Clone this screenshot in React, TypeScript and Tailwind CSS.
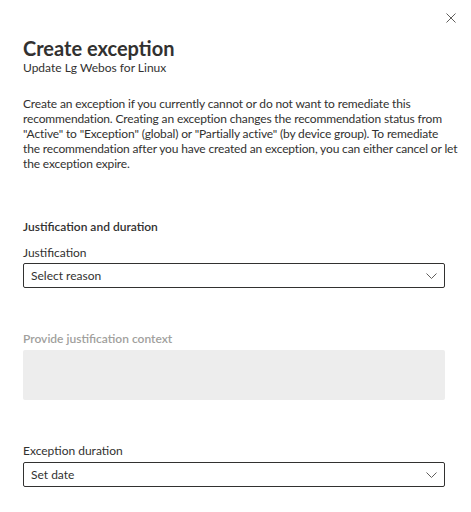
const font = { fontFamily: '"Segoe UI", Lato, "Noto Sans", sans-serif' };

function Chevron() {
  return (
    <svg width="11" height="6" viewBox="0 0 11 6" fill="none" className="text-[#605e5c]">
      <path d="M0.5 0.5 L5.5 5.5 L10.5 0.5" stroke="currentColor" strokeWidth="1" />
    </svg>
  );
}

function Dropdown({ value }: { value: string }) {
  return (
    <div className="flex h-[25px] items-center justify-between rounded-[2px] border border-[#323130] pl-[7px] pr-[7px] text-[12px] text-[#323130]">
      <span>{value}</span>
      <Chevron />
    </div>
  );
}

export default function App() {
  return (
    <div className="relative h-[512px] w-full bg-white text-[#323130]" style={font}>
      <button className="absolute right-[14px] top-[12px] p-[1px] text-[#605e5c]" aria-label="Close">
        <svg width="10" height="10" viewBox="0 0 10 10" fill="none">
          <path d="M0.5 0.5 L9.5 9.5 M9.5 0.5 L0.5 9.5" stroke="currentColor" strokeWidth="1" />
        </svg>
      </button>
      <div className="flex flex-col pl-[23px] pr-[26px] pt-[36px]">
        <h1 className="text-[20px] font-bold leading-[24px]">Create exception</h1>
        <p className="text-[12px] leading-[16px]">Update Lg Webos for Linux</p>
        <p className="-mr-[20px] mt-[20px] text-[12px] leading-[15px] tracking-[-0.15px] text-[#323130]">
          Create an exception if you currently cannot or do not want to remediate this
          <br />
          recommendation. Creating an exception changes the recommendation status from
          <br />
          "Active" to "Exception" (global) or "Partially active" (by device group). To remediate
          <br />
          the recommendation after you have created an exception, you can either cancel or let
          <br />
          the exception expire.
        </p>
        <h2 className="mt-[48px] text-[12px] font-semibold leading-[16px]">Justification and duration</h2>
        <label className="mt-[10px] text-[12px] leading-[16px]">Justification</label>
        <div className="mt-[2px]">
          <Dropdown value="Select reason" />
        </div>
        <label className="mt-[43px] text-[12px] font-semibold leading-[16px] text-[#a19f9d]">
          Provide justification context
        </label>
        <div className="mt-[3px] h-[50px] rounded-[2px] bg-[#ededed]" />
        <label className="mt-[43px] text-[12px] leading-[16px]">Exception duration</label>
        <div className="mt-[3px]">
          <Dropdown value="Set date" />
        </div>
      </div>
    </div>
  );
}
